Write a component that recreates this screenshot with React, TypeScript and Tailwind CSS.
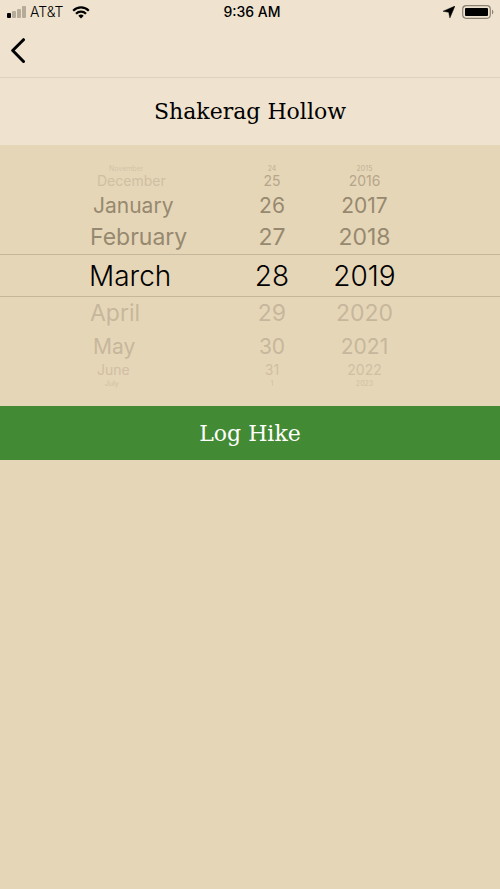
import { useState } from "react";
import clsx from "clsx";

const MONTHS = ["January", "February", "March", "April", "May", "June", "July", "August", "September", "October", "November", "December"];

// Rows of the date wheel, from the top edge of the drum to the bottom one.
const ROWS = [
  { offset: -4, row: "h-[10px] text-[7px] text-[#d3c3a6]", month: "pl-5", muted: "text-[#c0b092]" },
  { offset: -3, row: "h-4 text-[14px] text-[#cfbfa3]", month: "pl-2", muted: "text-[#b5a68a]" },
  { offset: -2, row: "h-8 text-[21px] text-[#96896f]", month: "pl-1", muted: "" },
  { offset: -1, row: "h-[33px] text-[23px] text-[#96896f]", month: "pl-px", muted: "" },
  { offset: 0, row: "h-[43px] border-y border-[#c5b799] text-[28px] font-light text-black", month: "", muted: "" },
  { offset: 1, row: "h-[33px] text-[23px] text-[#c6b79c]", month: "pl-px", muted: "" },
  { offset: 2, row: "h-8 text-[21px] text-[#c6b79c]", month: "pl-1", muted: "" },
  { offset: 3, row: "h-4 text-[14px] text-[#cfbfa3]", month: "pl-2", muted: "" },
  { offset: 4, row: "h-[10px] text-[7px] text-[#d0c0a3]", month: "pl-4", muted: "" },
];

function StatusBar() {
  return (
    <div className="grid h-6 grid-cols-3 items-center px-[6px] text-[14px] leading-6">
      <div className="flex items-center gap-1">
        <svg width="20" height="12" viewBox="0 0 20 12" aria-label="Signal">
          <rect x="1" y="7" width="4" height="5" rx="1" />
          <g fill="#b6aa98">
            <rect x="6" y="5" width="4" height="7" rx="1" />
            <rect x="11" y="3" width="4" height="9" rx="1" />
            <rect x="16" y="0" width="4" height="12" rx="1" />
          </g>
        </svg>
        <span className="font-light">AT&amp;T</span>
        <svg className="ml-1" width="18" height="13" viewBox="0 0 18 13" fill="none" stroke="black" strokeWidth="2.2" aria-label="Wi-Fi">
          <path d="M1.2 4.7a11 11 0 0 1 15.6 0" />
          <path d="M4 7.7a7 7 0 0 1 10 0" />
          <path d="M9 12.5 6.3 9.8a3.8 3.8 0 0 1 5.4 0Z" fill="black" stroke="none" />
        </svg>
      </div>
      <span className="pl-1 text-center font-medium">9:36 AM</span>
      <div className="flex items-center justify-end gap-[7px]">
        <svg width="12" height="12" viewBox="0 0 11 11" aria-label="Location">
          <path d="M11 0 6.3 11 5.2 5.8 0 4.8Z" stroke="black" strokeWidth="0.4" />
        </svg>
        <svg width="32" height="14" viewBox="0 0 32 14" aria-label="Battery">
          <rect x="0.7" y="0.7" width="27.6" height="12.6" rx="3.5" fill="none" stroke="#8b8274" strokeWidth="1.2" />
          <rect x="3" y="3" width="23" height="8" rx="1" />
          <path d="M30 4.7c1.8.6 1.8 4 0 4.6Z" fill="#8b8274" />
        </svg>
      </div>
    </div>
  );
}

export default function App() {
  const [month, setMonth] = useState(2);
  const [day, setDay] = useState(28);
  const [year, setYear] = useState(2019);
  const cell = "flex h-full cursor-pointer items-center";

  return (
    <div className="min-h-screen bg-[#e6d6b8] font-['Inter','Liberation_Sans',sans-serif] text-black">
      <header className="bg-[#efe3cf]">
        <StatusBar />
        <nav className="flex h-[54px] items-center border-b border-[#ddd2bf] px-[7px]">
          <button type="button" aria-label="Back" className="cursor-pointer p-1">
            <svg width="14" height="26" viewBox="0 0 14 26" fill="none" stroke="black" strokeWidth="3" strokeLinecap="round" strokeLinejoin="round">
              <path d="M12.5 1.7 1.7 12.5l10.8 11" />
            </svg>
          </button>
        </nav>
        <h1 className="py-[18px] text-center font-['DejaVu_Serif',serif] text-[22px] leading-[31px]">Shakerag Hollow</h1>
      </header>
      <main>
        <div role="group" aria-label="Hike date" className="py-[18px]">
          {ROWS.map(({ offset, row, month: inset, muted }) => {
            const m = (month + offset + 12) % 12;
            const d = ((day + offset + 30) % 31) + 1;
            const y = year + offset;
            return (
              <div key={offset} className={clsx("flex justify-center leading-none", row)}>
                <div className="grid h-full w-[322px] grid-cols-[137px_92px_93px]">
                  <button type="button" aria-pressed={offset === 0} onClick={() => setMonth(m)} className={clsx(cell, inset)}>
                    {MONTHS[m]}
                  </button>
                  <button type="button" aria-pressed={offset === 0} onClick={() => setDay(d)} className={clsx(cell, "justify-center", muted)}>
                    {d}
                  </button>
                  <button type="button" aria-pressed={offset === 0} onClick={() => setYear(y)} className={clsx(cell, "justify-center", muted)}>
                    {y}
                  </button>
                </div>
              </div>
            );
          })}
        </div>
        <button type="button" className="h-[54px] w-full cursor-pointer bg-[#438a34] font-['DejaVu_Serif',serif] text-[22px] text-white">
          Log Hike
        </button>
      </main>
    </div>
  );
}
